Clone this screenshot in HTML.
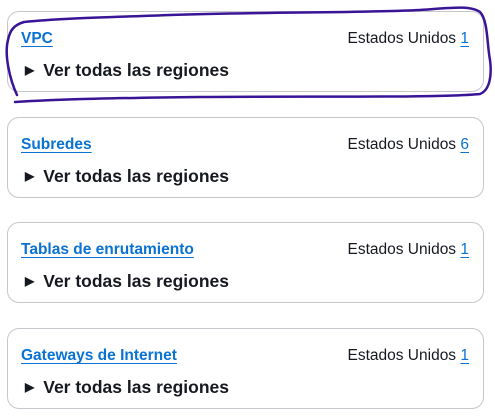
<!DOCTYPE html>
<html><head><meta charset="utf-8"><style>
body{margin:0;width:495px;height:416px;background:#fff;font-family:"Liberation Sans",sans-serif;position:relative;overflow:hidden}
.card{position:absolute;left:7px;width:477px;height:81px;border:1px solid #c6c6cd;border-radius:12px;box-sizing:border-box;background:#fff}
.t{position:absolute;left:13px;top:18px;font-size:15.5px;font-weight:bold;color:#0972d3;text-decoration:underline;text-underline-offset:3px}
.r{position:absolute;right:14px;top:18px;font-size:15.5px;color:#16191f}
.r u{color:#0972d3;text-underline-offset:3px}
.v{position:absolute;left:17px;top:48px;font-size:17.5px;font-weight:bold;color:#16191f}
.v span{font-size:12px;margin-right:9px;position:relative;top:-2px}
</style></head><body>
<div class="card" style="top:11px"><div class="t">VPC</div><div class="r">Estados Unidos <u>1</u></div><div class="v"><span>&#9654;</span>Ver todas las regiones</div></div>
<div class="card" style="top:117px"><div class="t">Subredes</div><div class="r">Estados Unidos <u>6</u></div><div class="v"><span>&#9654;</span>Ver todas las regiones</div></div>
<div class="card" style="top:222px"><div class="t">Tablas de enrutamiento</div><div class="r">Estados Unidos <u>1</u></div><div class="v"><span>&#9654;</span>Ver todas las regiones</div></div>
<div class="card" style="top:328px"><div class="t">Gateways de Internet</div><div class="r">Estados Unidos <u>1</u></div><div class="v"><span>&#9654;</span>Ver todas las regiones</div></div>
<svg style="position:absolute;left:0;top:0" width="495" height="416"><path d="M17,95 C10,80 4,55 8,40 C10,30 14,25 24,22 C60,18 120,17 170,15 C260,12 360,13 420,10 C450,8 470,5 480,12 C488,20 487,45 490,60 C492,75 490,90 480,94 C440,98 300,96 200,97 C120,98 60,99 15,102" fill="none" stroke="#3a1496" stroke-width="2.5" stroke-linecap="round"/></svg>
</body></html>
